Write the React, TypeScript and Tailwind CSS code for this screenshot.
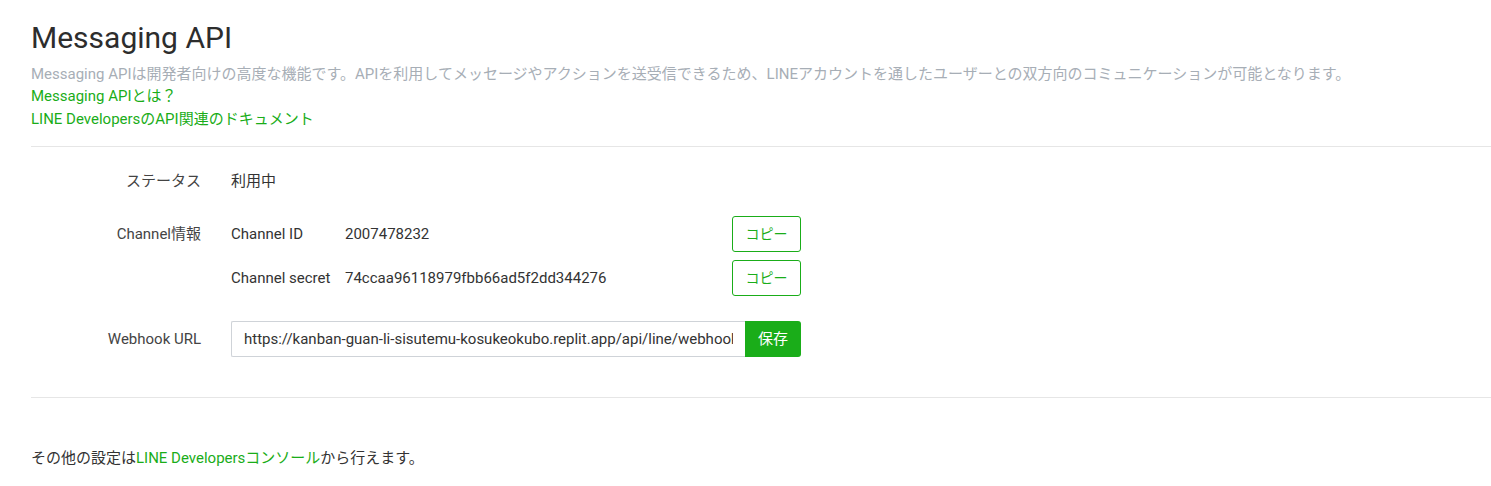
import React from 'react';

const GREEN = 'text-[#1aad19]';

const CopyButton: React.FC = () => (
  <button className="h-9 w-[69px] rounded-[3px] border border-[#1aad19] bg-white text-[14px] text-[#1aad19]">
    コピー
  </button>
);

export default function App() {
  const font = { fontFamily: 'Roboto, "Noto Sans CJK JP", sans-serif' };

  return (
    <div className="min-h-screen bg-white pl-[31px] pt-[20px] text-[#333]" style={font}>
      {/* Header */}
      <h1 className="text-[30px] leading-[36px] text-[#2d2d2d]">Messaging API</h1>
      <div className="mt-[7px] text-[15px] leading-[22px]">
        <p className="text-[#a7aeb6]">
          Messaging APIは開発者向けの高度な機能です。APIを利用してメッセージやアクションを送受信できるため、LINEアカウントを通したユーザーとの双方向のコミュニケーションが可能となります。
        </p>
        <p className={GREEN}>Messaging APIとは？</p>
        <p className={`${GREEN} mt-px`}>LINE DevelopersのAPI関連のドキュメント</p>
      </div>

      <hr className="mt-[16px] border-t border-[#e6e6e6]" />

      {/* Settings */}
      <div className="pt-[23px] text-[15px] leading-[22px]">
        <div className="flex items-center h-[22px]">
          <div className="w-[170px] text-right text-[#444]">ステータス</div>
          <div className="ml-[30px]">利用中</div>
        </div>

        <div className="mt-[24px] flex">
          <div className="w-[170px] pt-[7px] text-right text-[#444]">Channel情報</div>
          <div className="ml-[30px] w-[570px] flex flex-col gap-2">
            <div className="flex items-center h-9">
              <div className="w-[114px]">Channel ID</div>
              <div className="flex-1">2007478232</div>
              <CopyButton />
            </div>
            <div className="flex items-center h-9">
              <div className="w-[114px]">Channel secret</div>
              <div className="flex-1">74ccaa96118979fbb66ad5f2dd344276</div>
              <CopyButton />
            </div>
          </div>
        </div>

        <div className="mt-[25px] flex items-center">
          <div className="w-[170px] text-right text-[#444]">Webhook URL</div>
          <div className="ml-[30px] w-[570px] flex h-9">
            <input
              readOnly
              value="https://kanban-guan-li-sisutemu-kosukeokubo.replit.app/api/line/webhook"
              className="h-9 w-[514px] rounded-l-[2px] border border-r-0 border-[#cfd3d8] px-3 text-[15px] text-[#333] outline-none"
              style={font}
            />
            <button className="h-9 w-[56px] rounded-r-[3px] bg-[#1aad19] text-[15px] text-white">保存</button>
          </div>
        </div>
      </div>

      <hr className="mt-[40px] border-t border-[#e6e6e6]" />

      <p className="mt-[49px] text-[15px] leading-[22px]">
        その他の設定は<span className={GREEN}>LINE Developersコンソール</span>から行えます。
      </p>
    </div>
  );
}
